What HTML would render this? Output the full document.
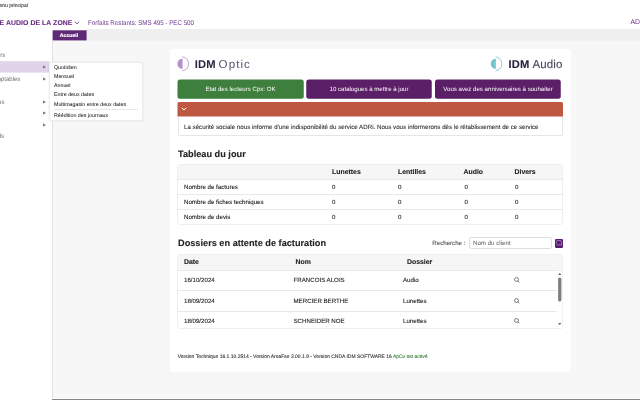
<!DOCTYPE html>
<html><head><meta charset="utf-8">
<style>
*{box-sizing:border-box;margin:0;padding:0}
html,body{text-rendering:geometricPrecision;width:640px;height:400px;overflow:hidden;background:#fff;font-family:"Liberation Sans",sans-serif;color:#222}
body{position:relative}
.abs{position:absolute;white-space:nowrap}
.t{position:absolute;white-space:nowrap;line-height:1;-webkit-text-stroke:0.1px currentColor}
#graybar{left:86px;top:29px;width:554px;height:12.5px;background:linear-gradient(#efefef 0,#efefef 80%,#f7f7f7 100%)}
#main{left:53px;top:41px;width:587px;height:357.5px;background:#f7f7f7}
#side{left:0;top:41px;width:53px;height:357px;background:#fff;border-right:1px solid #e3e3e3}
#bottom{left:52px;top:398px;width:588px;height:2px;background:linear-gradient(#fcfcfc 0,#fcfcfc 50%,#868686 50%,#868686 100%)}
#tab{left:52px;top:30.5px;width:34px;height:9.7px;color:#fff;-webkit-text-stroke:0.15px #fff;font-weight:bold;font-size:5.2px;text-align:center;line-height:10.4px}
#card{left:170px;top:49.3px;width:400.6px;height:323px;background:#fff;border-radius:4px}
.btn{position:absolute;top:79.4px;height:19.4px;border-radius:2.5px;color:#fff;font-size:6.1px;text-align:center;line-height:21.4px;white-space:nowrap}
.pur{color:#6a2c86}
.sb{font-size:6.3px;color:#6e6e6e;-webkit-text-stroke:0!important;transform:scaleX(0.95);transform-origin:100% 0}
.row{position:absolute;left:177px;width:386px;border-top:1px solid #e9e9e9}
.hl{background:#e0d3ea}
.tbl{position:absolute;left:177px;width:386px;border:1px solid #efefef;border-radius:3px;background:#fff}
.th{position:absolute;left:0;top:0;width:100%;background:#f6f6f6}
</style></head><body><div style="position:absolute;left:0;top:0;width:640px;height:400px;will-change:transform">
<div class="t" style="right:612.2px;top:3.7px;font-size:5px;color:#333">Menu principal</div>
<div class="t pur" style="right:567.5px;top:20.7px;font-size:6.88px;font-weight:bold;letter-spacing:0.07px">OPTIQUE AUDIO DE LA ZONE</div>
<svg class="abs" style="left:73.8px;top:20.7px" width="6" height="4" viewBox="0 0 6 4"><path d="M0.8 0.7 L3 2.8 L5.2 0.7" fill="none" stroke="#6a2c86" stroke-width="0.8"/></svg>
<div class="t pur" style="left:88.2px;top:20.5px;font-size:6.8px;transform:scaleX(0.911);transform-origin:0 0;-webkit-text-stroke:0;color:#6c3592">Forfaits Restants: SMS 495 - PEC 500</div>
<div class="t pur" style="left:630.4px;top:19.6px;font-size:6.8px;-webkit-text-stroke:0">ADRi</div>
<div class="abs" id="graybar"></div>
<div class="abs" id="main"></div>
<div class="abs" id="side"></div>
<svg class="abs" style="left:0;top:0" width="640" height="400" viewBox="0 0 640 400"><rect x="52.6" y="30.3" width="34" height="10.15" fill="#5e2a78"/><rect x="0" y="61.2" width="49" height="11.4" fill="#e0d3ea"/></svg>
<div class="abs" id="tab">Accueil</div>
<div class="abs" id="bottom"></div>

<!-- sidebar -->
<div class="t sb" style="right:634.5px;top:53.2px">Tiroirs</div>
<div class="t sb" style="right:620px;top:76.8px">Etats comptables</div>
<div class="t sb" style="right:635.7px;top:99.6px">Editions</div>
<div class="t sb" style="right:636.2px;top:134.2px">Outils</div>
<div class="t" style="left:43px;top:64.5px;font-size:4px;color:#777;-webkit-text-stroke:0">&#9654;</div>
<div class="t" style="left:43px;top:76.5px;font-size:4px;color:#777;-webkit-text-stroke:0">&#9654;</div>
<div class="t" style="left:43px;top:99.5px;font-size:4px;color:#777;-webkit-text-stroke:0">&#9654;</div>
<div class="t" style="left:43px;top:111px;font-size:4px;color:#777;-webkit-text-stroke:0">&#9654;</div>
<div class="t" style="left:43px;top:122.5px;font-size:4px;color:#777;-webkit-text-stroke:0">&#9654;</div>

<!-- card -->
<div class="abs" id="card"></div>
<!-- logos -->
<svg class="abs" style="left:172px;top:52px" width="24" height="24" viewBox="0 0 24 24"><path d="M10.5 6.75 A5.1 5.1 0 0 0 10.5 16.95 Z" fill="#b690ca"/><path d="M10.3 4.8 A7.1 7.1 0 0 1 10.3 18.9" fill="none" stroke="#b690ca" stroke-width="0.85"/></svg>
<div class="t" style="left:194.8px;top:59.6px;font-size:11.2px;color:#565170;-webkit-text-stroke:0"><b style="color:#2a2340;letter-spacing:0.1px">IDM</b><span style="font-size:11.5px;letter-spacing:1.1px;margin-left:3px">Optic</span></div>
<svg class="abs" style="left:486px;top:52px" width="24" height="24" viewBox="0 0 24 24"><path d="M9.8 6.75 A5.1 5.1 0 0 0 9.8 16.95 Z" fill="#76c4d0"/><path d="M9.6 4.8 A7.1 7.1 0 0 1 9.6 18.9" fill="none" stroke="#76c4d0" stroke-width="0.85"/></svg>
<div class="t" style="left:508.6px;top:59.6px;font-size:11.2px;color:#4a4560"><b style="color:#2a2340;letter-spacing:0.1px">IDM</b><span style="font-size:11.5px;letter-spacing:0.15px;margin-left:3px">Audio</span></div>

<svg class="abs" style="left:0;top:0" width="640" height="400" viewBox="0 0 640 400"><rect x="177.5" y="79.5" width="126.25" height="19.25" rx="2.5" fill="#3f7f3d"/><rect x="306.25" y="79.5" width="125.5" height="19.25" rx="2.5" fill="#5a1f66"/><rect x="435" y="79.5" width="125.75" height="19.25" rx="2.5" fill="#5a1f66"/><path d="M177.5 116.5 V103.5 Q177.5 102 179 102 H561.5 Q563 102 563 103.5 V116.5 Z" fill="#bf5843"/></svg>
<div class="btn" style="left:177.5px;width:126px">Etat des lecteurs Cpx: OK</div>
<div class="btn" style="left:306px;width:126px">10 catalogues à mettre à jour</div>
<div class="btn" style="left:435px;width:126px">Vous avez des anniversaires à souhaiter</div>

<svg class="abs" style="left:181px;top:107px" width="6" height="4" viewBox="0 0 6 4"><path d="M0.8 0.8 L3 3 L5.2 0.8" fill="none" stroke="#fff" stroke-width="1"/></svg>
<div class="abs" style="left:177.5px;top:116.5px;width:385.5px;height:19.8px;background:#fff;border:1px solid #e6e6e6;border-top:none;border-radius:0 0 2px 2px"></div>
<div class="t" style="left:184px;top:124.5px;font-size:6.185px;color:#333">La sécurité sociale nous informe d'une indisponibilité du service ADRi. Nous vous informerons dès le rétablissement de ce service</div>

<div class="t" style="left:178px;top:149.5px;font-size:9.2px;font-weight:bold;color:#222">Tableau du jour</div>

<div class="tbl" style="top:164px;height:60.5px">
 <div class="th" style="height:15px"></div>
</div>
<div class="row" style="top:179px"></div>
<div class="row" style="top:194px"></div>
<div class="row" style="top:209px"></div>
<div class="t" style="left:332px;top:169.5px;font-size:6.9px;font-weight:bold">Lunettes</div>
<div class="t" style="left:398px;top:169.5px;font-size:6.9px;font-weight:bold">Lentilles</div>
<div class="t" style="left:463.5px;top:169.5px;font-size:6.9px;font-weight:bold">Audio</div>
<div class="t" style="left:514.5px;top:169.5px;font-size:6.9px;font-weight:bold">Divers</div>
<div class="t" style="left:184px;top:184.6px;font-size:6.15px">Nombre de factures</div>
<div class="t" style="left:184px;top:199.6px;font-size:6.15px">Nombre de fiches techniques</div>
<div class="t" style="left:184px;top:214.6px;font-size:6.15px">Nombre de devis</div>
<div class="t" style="left:332px;top:184.6px;font-size:6.15px">0</div><div class="t" style="left:398px;top:184.6px;font-size:6.15px">0</div><div class="t" style="left:464.5px;top:184.6px;font-size:6.15px">0</div><div class="t" style="left:515px;top:184.6px;font-size:6.15px">0</div>
<div class="t" style="left:332px;top:199.6px;font-size:6.15px">0</div><div class="t" style="left:398px;top:199.6px;font-size:6.15px">0</div><div class="t" style="left:464.5px;top:199.6px;font-size:6.15px">0</div><div class="t" style="left:515px;top:199.6px;font-size:6.15px">0</div>
<div class="t" style="left:332px;top:214.6px;font-size:6.15px">0</div><div class="t" style="left:398px;top:214.6px;font-size:6.15px">0</div><div class="t" style="left:464.5px;top:214.6px;font-size:6.15px">0</div><div class="t" style="left:515px;top:214.6px;font-size:6.15px">0</div>

<div class="t" style="left:178px;top:238.8px;font-size:9.2px;font-weight:bold;color:#222">Dossiers en attente de facturation</div>
<div class="t" style="left:432.3px;top:240.8px;font-size:6.15px;color:#555">Recherche :</div>
<div class="abs" style="left:469.3px;top:237.3px;width:82.3px;height:11.4px;border:1px solid #ddd;border-radius:2.5px;background:#fff"></div>
<div class="t" style="left:473px;top:241px;font-size:6.15px;color:#777">Nom du client</div>
<div class="abs" style="left:555.3px;top:238.5px;width:7.9px;height:9px;background:#571b6e;border-radius:1.3px"></div>
<svg class="abs" style="left:555.3px;top:238.5px" width="7.9" height="9" viewBox="0 0 7.9 9"><path d="M1.3 4.6 V3 Q1.3 1.5 2.8 1.5 H4.9 Q6.4 1.5 6.4 3 V5.6 L6.6 6.3 L5.6 5.9 H1.5" fill="none" stroke="#cdb6dc" stroke-width="0.6"/></svg>

<div class="tbl" style="top:254px;height:74.6px;overflow:hidden">
 <div class="th" style="height:15.5px"></div>
</div>
<div class="row" style="top:270px"></div>
<div class="row" style="top:290px"></div>
<div class="row" style="top:311px"></div>
<div class="t" style="left:184px;top:259.5px;font-size:6.9px;font-weight:bold">Date</div>
<div class="t" style="left:295.5px;top:259.5px;font-size:6.9px;font-weight:bold">Nom</div>
<div class="t" style="left:407px;top:259.5px;font-size:6.9px;font-weight:bold">Dossier</div>
<div class="t" style="left:184px;top:278px;font-size:6.15px">16/10/2024</div><div class="t" style="left:293.5px;top:278px;font-size:6.15px">FRANCOIS ALOIS</div><div class="t" style="left:403px;top:278px;font-size:6.15px">Audio</div>
<div class="t" style="left:184px;top:298.5px;font-size:6.15px">18/09/2024</div><div class="t" style="left:293.5px;top:298.5px;font-size:6.15px">MERCIER BERTHE</div><div class="t" style="left:403px;top:298.5px;font-size:6.15px">Lunettes</div>
<div class="t" style="left:184px;top:319px;font-size:6.15px">18/09/2024</div><div class="t" style="left:293.5px;top:319px;font-size:6.15px">SCHNEIDER NOE</div><div class="t" style="left:403px;top:319px;font-size:6.15px">Lunettes</div>
<svg class="abs" style="left:513px;top:276px" width="8" height="8" viewBox="0 0 8 8"><circle cx="3.5" cy="3.5" r="1.95" fill="none" stroke="#3a3a3a" stroke-width="0.65"/><path d="M4.9 4.9 L6.3 6.3" stroke="#3a3a3a" stroke-width="0.7"/></svg>
<svg class="abs" style="left:513px;top:296.5px" width="8" height="8" viewBox="0 0 8 8"><circle cx="3.5" cy="3.5" r="1.95" fill="none" stroke="#3a3a3a" stroke-width="0.65"/><path d="M4.9 4.9 L6.3 6.3" stroke="#3a3a3a" stroke-width="0.7"/></svg>
<svg class="abs" style="left:513px;top:317px" width="8" height="8" viewBox="0 0 8 8"><circle cx="3.5" cy="3.5" r="1.95" fill="none" stroke="#3a3a3a" stroke-width="0.65"/><path d="M4.9 4.9 L6.3 6.3" stroke="#3a3a3a" stroke-width="0.7"/></svg>
<!-- scrollbar -->
<svg class="abs" style="left:0;top:0" width="640" height="400" viewBox="0 0 640 400"><rect x="556.8" y="270.6" width="5.4" height="57.2" fill="#fff"/><rect x="558.1" y="277.4" width="3.3" height="24.2" rx="1.65" fill="#7f7f7f"/><path d="M558 274.9 L559.75 272.9 L561.5 274.9 Z" fill="#666"/><path d="M558 323.1 L559.75 325.1 L561.5 323.1 Z" fill="#666"/></svg>

<div class="t" style="left:177.8px;top:354.8px;font-size:4.98px;color:#333">Version Technique 16.1.10.2514 - Version AreaFse 3.00.1.9 - Version CNDA IDM SOFTWARE 16 <span style="color:#2e7d32">ApCv est activé</span></div>

<!-- submenu popup -->
<div class="abs" style="left:49px;top:61.5px;width:93.7px;height:59px;background:#fff;border:1px solid #ececec;border-radius:2px;box-shadow:0 0 2px rgba(0,0,0,0.1)"></div>
<div class="t" style="left:54px;top:65.5px;font-size:5.3px;color:#222;-webkit-text-stroke:0.04px">Quotidien</div>
<div class="t" style="left:54px;top:74.8px;font-size:5.3px;color:#222;-webkit-text-stroke:0.04px">Mensuel</div>
<div class="t" style="left:54px;top:84.4px;font-size:5.3px;color:#222;-webkit-text-stroke:0.04px">Annuel</div>
<div class="t" style="left:54px;top:93.4px;font-size:5.3px;color:#222;-webkit-text-stroke:0.04px">Entre deux dates</div>
<div class="t" style="left:54px;top:102.5px;font-size:5.3px;color:#222;-webkit-text-stroke:0.04px">Multimagasin entre deux dates</div>
<div class="abs" style="left:54px;top:109px;width:84px;height:1px;background:#e8e8e8"></div>
<div class="t" style="left:54px;top:114px;font-size:5.3px;color:#222;-webkit-text-stroke:0.04px">Réédition des journaux</div>
</div></body></html>
